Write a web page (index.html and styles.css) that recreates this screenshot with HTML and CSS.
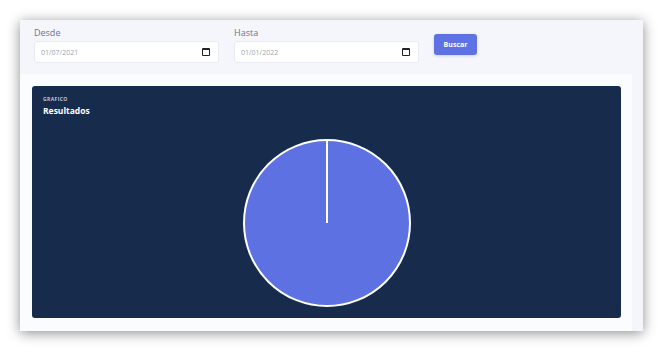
FILE: index.html
```html
<!DOCTYPE html>
<html>
<head>
    <title>Resultados</title>
    <link rel="stylesheet" href="styles.css">
</head>
<body>
    <div id="window">
        <div class="filters">
            <div class="field">
                <label>Desde</label>
                <div class="dateInput">
                    <span>01/07/2021</span>
                    <span class="calIcon"></span>
                </div>
            </div>
            <div class="field">
                <label>Hasta</label>
                <div class="dateInput">
                    <span>01/01/2022</span>
                    <span class="calIcon"></span>
                </div>
            </div>
            <button class="myButton">Buscar</button>
        </div>
        <div class="content">
            <div class="card">
                <div class="chartPanel">
                    <div class="eyebrow">GRAFICO</div>
                    <div class="title">Resultados</div>
                    <div class="chart">
                        <svg width="170" height="170" viewBox="0 0 170 170">
                            <circle cx="85" cy="85" r="83" fill="#5d71e2" stroke="#ffffff" stroke-width="2"/>
                            <line x1="85" y1="2" x2="85" y2="85" stroke="#ffffff" stroke-width="2"/>
                        </svg>
                    </div>
                </div>
            </div>
        </div>
    </div>
</body>
</html>
```

FILE: styles.css
```css
body {
    font-family: "Open Sans", Arial, sans-serif;
    background-color: #ffffff;
    margin: 0;
    padding: 20px;
}

#window {
    width: 623px;
    height: 311px;
    background-color: #f5f6fb;
    box-shadow: 0px 2px 12px rgba(0, 0, 0, 0.45);
    display: flex;
    flex-direction: column;
}

.filters {
    height: 54px;
    box-sizing: border-box;
    padding: 6px 0 0 14px;
    display: flex;
    align-items: flex-start;
    gap: 15px;
}

.field {
    width: 185px;
    display: flex;
    flex-direction: column;
}

.field label {
    font-size: 9px;
    line-height: 13px;
    color: #6b7590;
    height: 15px;
}

.dateInput {
    height: 22px;
    box-sizing: border-box;
    background-color: #ffffff;
    border: 1px solid #e8ebf1;
    border-radius: 3px;
    display: flex;
    align-items: center;
    justify-content: space-between;
    padding: 0 8px 0 6px;
    font-size: 7px;
    color: #9aa3b5;
}

.calIcon {
    width: 6px;
    height: 5px;
    border: 1px solid #222;
    border-top-width: 2px;
    border-radius: 1px;
}

.myButton {
    margin-top: 8px;
    width: 43px;
    height: 21px;
    border: none;
    border-radius: 3px;
    background-color: #5e72e4;
    color: #ffffff;
    font-family: "Open Sans", Arial, sans-serif;
    font-size: 7px;
    font-weight: bold;
    padding: 0;
    box-shadow: 0px 1px 3px rgba(50, 50, 93, 0.2);
}

.content {
    flex: 1;
    padding-right: 11px;
    display: flex;
}

.card {
    flex: 1;
    background-color: #fbfcfd;
    padding: 12px 11px 13px 12px;
}

.chartPanel {
    height: 232px;
    box-sizing: border-box;
    background-color: #172b4d;
    border-radius: 3px;
    padding: 9px 11px 10px 11px;
}

.eyebrow {
    font-size: 5px;
    line-height: 8px;
    font-weight: bold;
    letter-spacing: 0.4px;
    color: #c3c8d4;
}

.title {
    margin-top: 2px;
    font-size: 8.5px;
    line-height: 12px;
    font-weight: bold;
    color: #ffffff;
}

.chart {
    margin-top: 21px;
    display: flex;
    justify-content: center;
}

.chart svg {
    display: block;
}
```
